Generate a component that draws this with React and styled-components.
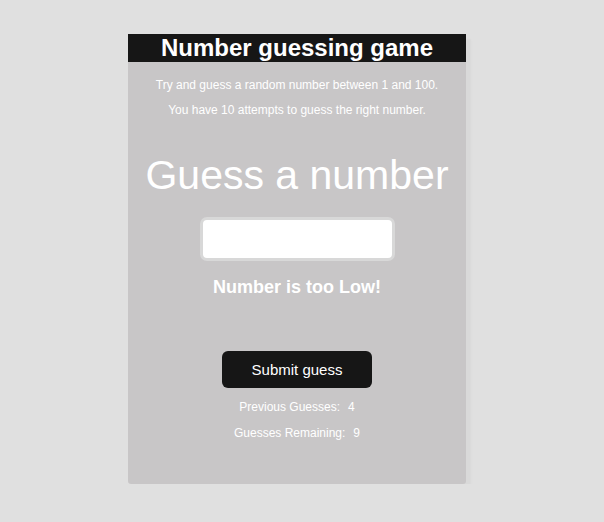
import React from 'react';
import styled, { createGlobalStyle } from 'styled-components';

const GlobalStyle = createGlobalStyle`
  html, body {
    margin: 0;
    background: #e0e0e0;
    font-family: "Liberation Sans", Arial, sans-serif;
  }
`;

const Page = styled.div`
  padding: 34px 0 0 128px;
`;

const Card = styled.div`
  width: 338px;
  height: 450px;
  background: #c8c6c7;
  border-radius: 0 0 3px 3px;
  box-shadow: 5px 5px 2px #d9d9d9;
  display: flex;
  flex-direction: column;
  align-items: center;
  color: #fff;
`;

const Header = styled.h1`
  align-self: stretch;
  margin: 0;
  height: 28px;
  background: #161616;
  color: #fff;
  font-size: 24px;
  line-height: 28px;
  font-weight: bold;
  text-align: center;
`;

const Intro = styled.p`
  margin: ${(p) => p.top}px 0 0;
  font-size: 12px;
  line-height: 14px;
`;

const Heading = styled.h2`
  margin: 34px 0 0;
  font-size: 41px;
  line-height: 48px;
  font-weight: normal;
`;

const Input = styled.input`
  box-sizing: border-box;
  margin-top: 18px;
  width: 195px;
  height: 44px;
  border: 3px solid #d8d8d8;
  border-radius: 7px;
  background: #fff;
  outline: none;
`;

const Result = styled.p`
  margin: 16px 0 0;
  font-size: 18px;
  line-height: 20px;
  font-weight: bold;
`;

const Button = styled.button`
  margin-top: 54px;
  width: 150px;
  height: 37px;
  border: none;
  border-radius: 6px;
  background: #161616;
  color: #fff;
  font-family: inherit;
  font-size: 15px;
`;

const Stat = styled.p`
  margin: 12px 0 0;
  font-size: 12px;
  line-height: 14px;
`;

const StatValue = styled.span`
  margin-left: 8px;
`;

const App = () => (
  <Page>
    <GlobalStyle />
    <Card>
      <Header>Number guessing game</Header>
      <Intro top={16}>Try and guess a random number between 1 and 100.</Intro>
      <Intro top={11}>You have 10 attempts to guess the right number.</Intro>
      <Heading>Guess a number</Heading>
      <Input type="text" />
      <Result>Number is too Low!</Result>
      <Button>Submit guess</Button>
      <Stat>
        Previous Guesses:
        <StatValue>4</StatValue>
      </Stat>
      <Stat>
        Guesses Remaining:
        <StatValue>9</StatValue>
      </Stat>
    </Card>
  </Page>
);

export default App;
